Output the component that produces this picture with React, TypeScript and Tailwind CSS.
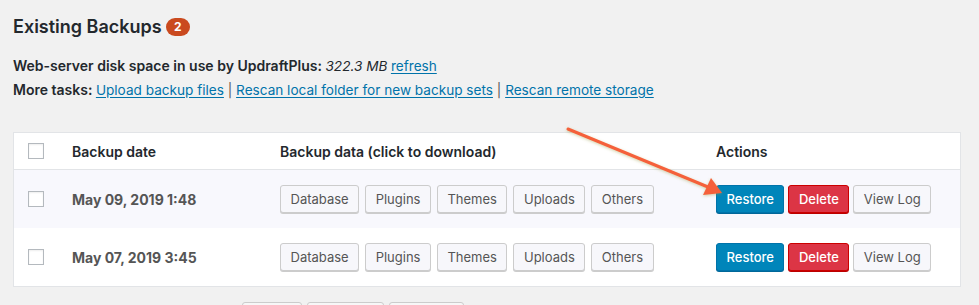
import React from 'react';

const font = { fontFamily: 'Inter, "Noto Sans", sans-serif' };

const backups = [
  { date: 'May 09, 2019 1:48', shaded: true },
  { date: 'May 07, 2019 3:45', shaded: false },
];

const parts = ['Database', 'Plugins', 'Themes', 'Uploads', 'Others'];

function Checkbox() {
  return <span className="block w-4 h-4 border border-[#b4b9be] bg-white shadow-[inset_0_1px_2px_rgba(0,0,0,0.07)]" />;
}

function Btn({ children, kind = 'default' }: { children: React.ReactNode; kind?: 'default' | 'primary' | 'danger' }) {
  const styles = {
    default: 'bg-[#f7f7fb] border-[#ccc] text-[#555] shadow-[0_1px_0_#ccc]',
    primary: 'bg-[#0085ba] border-[#0073aa] text-white font-medium shadow-[0_1px_0_#006799]',
    danger: 'bg-[#dc3545] border-[#c00] text-white font-medium shadow-[0_1px_0_#b00]',
  };
  return (
    <button className={`h-[28px] px-[9.5px] rounded-[3px] border text-[13px] leading-none ${styles[kind]}`}>
      {children}
    </button>
  );
}

export default function App() {
  return (
    <div className="relative min-h-[305px] bg-[#f1f1f1] text-[#23282d] pl-[13px] pr-[18px] pt-[13px]" style={font}>
      <h2 className="flex items-center gap-[4px] text-[18px] font-semibold leading-[28px]">
        Existing Backups
        <span className="inline-flex items-center justify-center w-[24px] h-[18px] rounded-full bg-[#ca4a1f] text-white text-[12px] font-bold leading-none">
          2
        </span>
      </h2>

      <div className="mt-[13px] text-[14px] leading-[24px] font-semibold">
        <p>
          Web-server disk space in use by UpdraftPlus: <em className="font-normal text-[13.6px]">322.3 MB</em>{' '}
          <a className="font-normal text-[13.6px] text-[#0073aa] underline underline-offset-2">refresh</a>
        </p>
        <p>
          More tasks: <a className="font-normal text-[13.6px] text-[#0073aa] underline underline-offset-2">Upload backup files</a>
          <span className="font-normal text-[13.6px] text-[#555]"> | </span>
          <a className="font-normal text-[13.6px] text-[#0073aa] underline underline-offset-2">Rescan local folder for new backup sets</a>
          <span className="font-normal text-[13.6px] text-[#555]"> | </span>
          <a className="font-normal text-[13.6px] text-[#0073aa] underline underline-offset-2">Rescan remote storage</a>
        </p>
      </div>

      <div className="mt-[30px] w-[948px] bg-white border border-[#e2e4e7]">
        <div className="grid grid-cols-[58px_208px_436px_1fr] items-center h-[37px] border-b border-[#e2e4e7] text-[14px] font-semibold">
          <div className="pl-[14px]"><Checkbox /></div>
          <div>Backup date</div>
          <div>Backup data (click to download)</div>
          <div>Actions</div>
        </div>
        {backups.map((b) => (
          <div
            key={b.date}
            className={`grid grid-cols-[58px_208px_436px_1fr] items-center h-[58px] ${b.shaded ? 'bg-[#f8f8fd]' : 'bg-white'}`}
          >
            <div className="pl-[14px]"><Checkbox /></div>
            <div className="text-[14px] font-bold text-[#555]">{b.date}</div>
            <div className="flex gap-[6px]">
              {parts.map((p) => (
                <Btn key={p}>{p}</Btn>
              ))}
            </div>
            <div className="flex gap-[4px]">
              <Btn kind="primary">Restore</Btn>
              <Btn kind="danger">Delete</Btn>
              <Btn>View Log</Btn>
            </div>
          </div>
        ))}
      </div>

      <div className="mt-[15px] pl-[229px] flex gap-[5px]">
        <button className="w-[60px] h-[28px] rounded-[3px] border border-[#ccc] bg-[#f7f7f7] text-[13px] text-[#555]">Delete</button>
        <button className="w-[77px] h-[28px] rounded-[3px] border border-[#ccc] bg-[#f7f7f7] text-[13px] text-[#555]">Select all</button>
        <button className="w-[75px] h-[28px] rounded-[3px] border border-[#ccc] bg-[#f7f7f7] text-[13px] text-[#555]">Deselect</button>
      </div>

      {/* annotation arrow */}
      <svg className="absolute left-0 top-0 pointer-events-none" width="979" height="305">
        <defs>
          <filter id="glow" x="-20%" y="-20%" width="140%" height="140%">
            <feDropShadow dx="0" dy="1" stdDeviation="1.5" floodColor="#9a9a40" floodOpacity="0.45" />
          </filter>
        </defs>
        <g filter="url(#glow)">
          <line x1="568" y1="129" x2="708" y2="187" stroke="#f5603a" strokeWidth="3" strokeLinecap="round" />
          <polygon points="722,193 703,195 711,178" fill="#f5603a" />
        </g>
      </svg>
    </div>
  );
}
